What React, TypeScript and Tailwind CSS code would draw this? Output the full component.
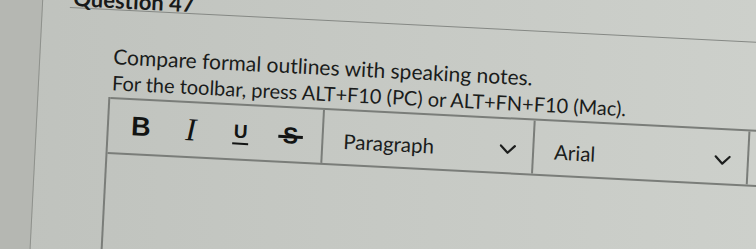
import React from "react"

function Chevron() {
  return (
    <svg width="17" height="10" viewBox="0 0 17 10" fill="none" stroke="#1d1f1e" strokeWidth="2.2" strokeLinecap="round" strokeLinejoin="round">
      <path d="M1.5 1.5l7 7 7-7" />
    </svg>
  )
}

function ToolButton({ children }: { children: React.ReactNode }) {
  return <div className="flex w-[50px] items-center justify-center text-[#121413]">{children}</div>
}

function Dropdown({ label, width }: { label: string; width: string }) {
  return (
    <div className={`flex ${width} shrink-0 items-center border-r-2 border-[#7a7d79] pl-[20px] pr-[16px] pt-[7px]`}>
      <span className="flex-1 text-[20.5px] leading-[24px] text-[#1b1d1c]">{label}</span>
      <Chevron />
    </div>
  )
}

export default function App() {
  return (
    <div className="h-[249px] w-[756px] overflow-hidden bg-linear-to-r from-[#bfc2bd] to-[#cdd0cb] font-[Lato,'Liberation_Sans',sans-serif]">
      <div className="-ml-[100px] -mt-[95px] flex h-[460px] w-[980px] origin-[208px_199px] rotate-[2.9deg]">
        {/* left rail */}
        <div className="w-[138px] shrink-0 border-r-[1.5px] border-[#8e918c] bg-[#b5b7b2]" />

        <div className="flex-1 pt-[90px]">
          {/* question header */}
          <div className="ml-[27px] flex h-[14.5px] items-start border-b-[1.5px] border-[#858884]">
            <div className="-mt-[6px] pl-[3px] text-[22px] font-bold leading-none text-[#181a19]">Question 47</div>
          </div>

          {/* question text */}
          <div className="ml-[73px] mt-[33px] leading-[26px] text-[#1a1c1b]">
            <p className="text-[21px]">Compare formal outlines with speaking notes.</p>
            <p className="text-[20px]">For the toolbar, press ALT+F10 (PC) or ALT+FN+F10 (Mac).</p>
          </div>

          {/* editor */}
          <div className="ml-[70px] mt-[2px] h-[300px] border-l-2 border-[#7a7d79]">
            <div className="flex h-[57px] border-y-2 border-[#7a7d79]">
              <div className="flex w-[215px] shrink-0 border-r-2 border-[#7a7d79] pl-[7px]">
                <ToolButton>
                  <span className="font-['Liberation_Sans',sans-serif] text-[27px] font-bold leading-none">B</span>
                </ToolButton>
                <ToolButton>
                  <span className="font-['Liberation_Serif',serif] text-[32px] italic leading-none">I</span>
                </ToolButton>
                <ToolButton>
                  <div className="flex flex-col items-center pt-[3px]">
                    <span className="font-['Liberation_Sans',sans-serif] text-[19px] font-bold leading-none">U</span>
                    <div className="mt-[2px] h-[2.5px] w-[16px] bg-[#121413]" />
                  </div>
                </ToolButton>
                <ToolButton>
                  <span className="pt-[3px] font-['Liberation_Sans',sans-serif] text-[23px] font-bold leading-none line-through decoration-[2.5px]">
                    {"\u2009S\u2009"}
                  </span>
                </ToolButton>
              </div>
              <Dropdown label="Paragraph" width="w-[211px]" />
              <Dropdown label="Arial" width="w-[215px]" />
              <div className="flex-1" />
            </div>
          </div>
        </div>
      </div>
    </div>
  )
}
